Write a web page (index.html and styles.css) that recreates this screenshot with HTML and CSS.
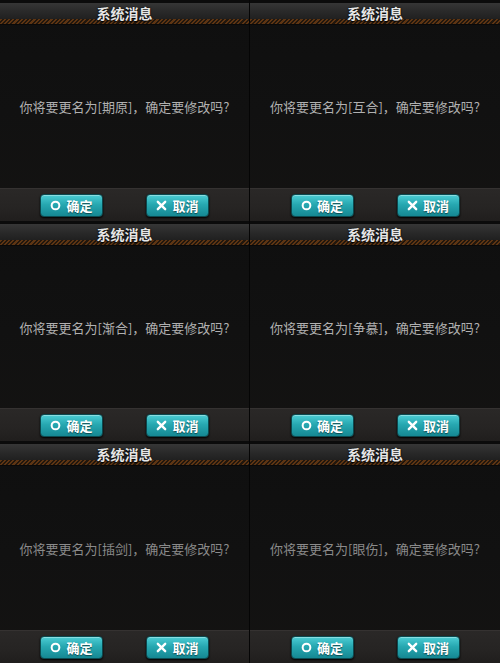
FILE: index.html
```html
<!DOCTYPE html>
<html lang="zh">
<head>
<meta charset="utf-8">
<link rel="stylesheet" href="styles.css">
</head>
<body>
<div class="grid">
  <div class="dlg">
    <div class="top"></div>
    <div class="head">系统消息</div>
    <div class="stripe"></div>
    <div class="body"><p class="msg">你将要更名为[期原]，确定要修改吗?</p></div>
    <div class="foot">
      <button class="btn"><svg viewBox="0 0 12 12" class="ico"><circle cx="6" cy="6" r="4.2" fill="none" stroke="#fff" stroke-width="2.2"/></svg>确定</button>
      <button class="btn"><svg viewBox="0 0 12 12" class="ico"><path d="M2 2L10 10M10 2L2 10" stroke="#fff" stroke-width="2.6" stroke-linecap="round"/></svg>取消</button>
    </div>
  </div>
  <div class="dlg">
    <div class="top"></div>
    <div class="head">系统消息</div>
    <div class="stripe"></div>
    <div class="body"><p class="msg">你将要更名为[互合]，确定要修改吗?</p></div>
    <div class="foot">
      <button class="btn"><svg viewBox="0 0 12 12" class="ico"><circle cx="6" cy="6" r="4.2" fill="none" stroke="#fff" stroke-width="2.2"/></svg>确定</button>
      <button class="btn"><svg viewBox="0 0 12 12" class="ico"><path d="M2 2L10 10M10 2L2 10" stroke="#fff" stroke-width="2.6" stroke-linecap="round"/></svg>取消</button>
    </div>
  </div>
  <div class="dlg">
    <div class="top"></div>
    <div class="head">系统消息</div>
    <div class="stripe"></div>
    <div class="body"><p class="msg">你将要更名为[渐合]，确定要修改吗?</p></div>
    <div class="foot">
      <button class="btn"><svg viewBox="0 0 12 12" class="ico"><circle cx="6" cy="6" r="4.2" fill="none" stroke="#fff" stroke-width="2.2"/></svg>确定</button>
      <button class="btn"><svg viewBox="0 0 12 12" class="ico"><path d="M2 2L10 10M10 2L2 10" stroke="#fff" stroke-width="2.6" stroke-linecap="round"/></svg>取消</button>
    </div>
  </div>
  <div class="dlg">
    <div class="top"></div>
    <div class="head">系统消息</div>
    <div class="stripe"></div>
    <div class="body"><p class="msg">你将要更名为[争慕]，确定要修改吗?</p></div>
    <div class="foot">
      <button class="btn"><svg viewBox="0 0 12 12" class="ico"><circle cx="6" cy="6" r="4.2" fill="none" stroke="#fff" stroke-width="2.2"/></svg>确定</button>
      <button class="btn"><svg viewBox="0 0 12 12" class="ico"><path d="M2 2L10 10M10 2L2 10" stroke="#fff" stroke-width="2.6" stroke-linecap="round"/></svg>取消</button>
    </div>
  </div>
  <div class="dlg">
    <div class="top"></div>
    <div class="head">系统消息</div>
    <div class="stripe"></div>
    <div class="body"><p class="msg dim">你将要更名为[插剑]，确定要修改吗?</p></div>
    <div class="foot">
      <button class="btn"><svg viewBox="0 0 12 12" class="ico"><circle cx="6" cy="6" r="4.2" fill="none" stroke="#fff" stroke-width="2.2"/></svg>确定</button>
      <button class="btn"><svg viewBox="0 0 12 12" class="ico"><path d="M2 2L10 10M10 2L2 10" stroke="#fff" stroke-width="2.6" stroke-linecap="round"/></svg>取消</button>
    </div>
  </div>
  <div class="dlg">
    <div class="top"></div>
    <div class="head">系统消息</div>
    <div class="stripe"></div>
    <div class="body"><p class="msg dim">你将要更名为[眼伤]，确定要修改吗?</p></div>
    <div class="foot">
      <button class="btn"><svg viewBox="0 0 12 12" class="ico"><circle cx="6" cy="6" r="4.2" fill="none" stroke="#fff" stroke-width="2.2"/></svg>确定</button>
      <button class="btn"><svg viewBox="0 0 12 12" class="ico"><path d="M2 2L10 10M10 2L2 10" stroke="#fff" stroke-width="2.6" stroke-linecap="round"/></svg>取消</button>
    </div>
  </div>
</div>
</body>
</html>
```
FILE: styles.css
```css
html, body {
  margin: 0;
  padding: 0;
  background: #080808;
}
body {
  width: 500px;
  height: 663px;
  overflow: hidden;
  font-family: "Noto Sans CJK SC", "Noto Sans", sans-serif;
}
.grid {
  display: grid;
  grid-template-columns: 249px 250px;
  grid-template-rows: 221px 220px 222px;
  column-gap: 1px;
  background: #050505;
  height: 663px;
}
.dlg {
  display: flex;
  flex-direction: column;
  background: linear-gradient(180deg, #0f0f0f 0%, #111 50%, #141312 100%);
  overflow: hidden;
}
.top {
  height: 3px;
  background: #0b0b0b;
}
.head {
  height: 16px;
  line-height: 21px;
  text-align: center;
  font-size: 14px;
  font-weight: 700;
  color: #e6e6e6;
  text-shadow: 0 0 2px #000, 0 1px 1px #000;
  background: linear-gradient(180deg, #363636 0%, #2a2a2a 50%, #202020 100%);
  position: relative;
  z-index: 1;
}
.stripe {
  height: 5px;
  background: repeating-linear-gradient(135deg, #5e3513 0 1.5px, #22170d 1.5px 3px);
  border-bottom: 1px solid #090909;
}
.body {
  flex: 1;
  display: flex;
  align-items: center;
  justify-content: center;
}
.msg {
  margin: 0;
  font-size: 13px;
  color: #b0b0b0;
  white-space: nowrap;
}
.msg.dim {
  color: #8a8a8a;
}
.foot {
  height: 33px;
  flex: none;
  display: flex;
  align-items: center;
  justify-content: center;
  gap: 43px;
  background: linear-gradient(180deg, #2a2827 0%, #262423 60%, #201e1d 100%);
  border-top: 1px solid #353231;
  box-sizing: border-box;
}
.btn {
  width: 63px;
  height: 23px;
  padding: 0;
  display: flex;
  align-items: center;
  justify-content: center;
  gap: 5px;
  border: 1px solid #0b4a50;
  border-radius: 4px;
  background: linear-gradient(180deg, #4ccdd4 0%, #27a8b1 45%, #158893 100%);
  box-shadow: inset 0 1px 0 rgba(255,255,255,0.35), 0 1px 2px #000;
  color: #fff;
  font-family: "Noto Sans CJK SC", sans-serif;
  font-size: 13px;
  font-weight: 700;
  text-shadow: 0 1px 1px rgba(0,0,0,0.5);
}
.ico {
  width: 11px;
  height: 11px;
}
```
